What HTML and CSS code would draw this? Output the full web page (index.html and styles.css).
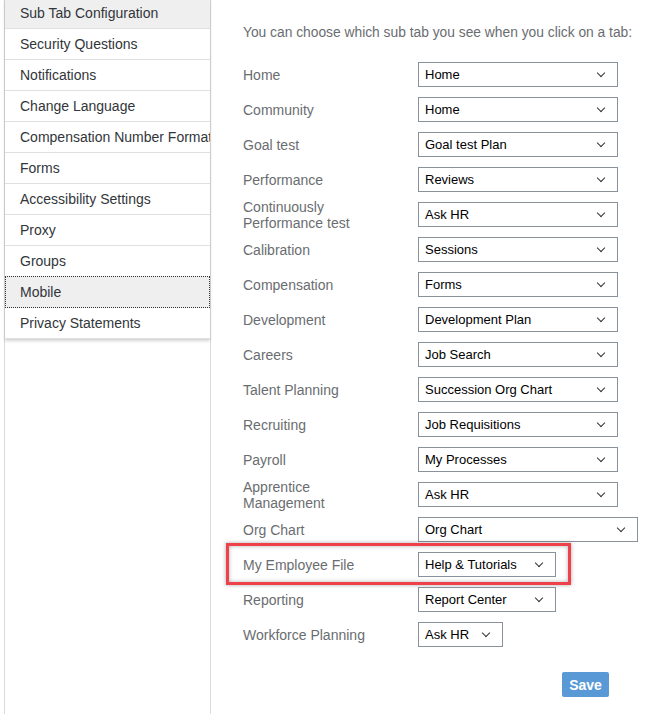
FILE: index.html
```html
<!DOCTYPE html>
<html lang="en">
<head>
    <meta charset="UTF-8">
    <title>Sub Tab Configuration</title>
    <link rel="stylesheet" href="styles.css">
</head>
<body>
    <aside class="sidebar">
        <ul class="side-nav">
            <li class="current">Sub Tab Configuration</li>
            <li>Security Questions</li>
            <li>Notifications</li>
            <li>Change Language</li>
            <li>Compensation Number Format</li>
            <li>Forms</li>
            <li>Accessibility Settings</li>
            <li>Proxy</li>
            <li>Groups</li>
            <li class="focused">Mobile</li>
            <li>Privacy Statements</li>
        </ul>
    </aside>

    <main class="content">
        <p class="intro">You can choose which sub tab you see when you click on a tab:</p>

        <div class="tab-list">
            <div class="tab-row"><span class="tab-label">Home</span><div class="picker w-200">Home</div></div>
            <div class="tab-row"><span class="tab-label">Community</span><div class="picker w-200">Home</div></div>
            <div class="tab-row"><span class="tab-label">Goal test</span><div class="picker w-200">Goal test Plan</div></div>
            <div class="tab-row"><span class="tab-label">Performance</span><div class="picker w-200">Reviews</div></div>
            <div class="tab-row"><span class="tab-label">Continuously<br>Performance test</span><div class="picker w-200">Ask HR</div></div>
            <div class="tab-row"><span class="tab-label">Calibration</span><div class="picker w-200">Sessions</div></div>
            <div class="tab-row"><span class="tab-label">Compensation</span><div class="picker w-200">Forms</div></div>
            <div class="tab-row"><span class="tab-label">Development</span><div class="picker w-200">Development Plan</div></div>
            <div class="tab-row"><span class="tab-label">Careers</span><div class="picker w-200">Job Search</div></div>
            <div class="tab-row"><span class="tab-label">Talent Planning</span><div class="picker w-200">Succession Org Chart</div></div>
            <div class="tab-row"><span class="tab-label">Recruiting</span><div class="picker w-200">Job Requisitions</div></div>
            <div class="tab-row"><span class="tab-label">Payroll</span><div class="picker w-200">My Processes</div></div>
            <div class="tab-row"><span class="tab-label">Apprentice<br>Management</span><div class="picker w-200">Ask HR</div></div>
            <div class="tab-row"><span class="tab-label">Org Chart</span><div class="picker w-220">Org Chart</div></div>
            <div class="tab-row highlighted"><span class="tab-label">My Employee File</span><div class="picker w-138">Help &amp; Tutorials</div></div>
            <div class="tab-row"><span class="tab-label">Reporting</span><div class="picker w-138">Report Center</div></div>
            <div class="tab-row"><span class="tab-label">Workforce Planning</span><div class="picker w-85">Ask HR</div></div>
        </div>

        <div class="actions">
            <button class="btn-save">Save</button>
        </div>
    </main>
</body>
</html>
```

FILE: styles.css
```css
*, *::before, *::after {
    margin: 0;
    padding: 0;
    box-sizing: border-box;
}

body {
    font-family: 'Liberation Sans', Arial, sans-serif;
    font-size: 14px;
    color: #32363a;
    background: #fff;
    display: flex;
    min-height: 100vh;
    overflow: hidden;
}

.sidebar {
    width: 207px;
    margin-left: 4px;
    border-left: 1px solid #d9d9d9;
    border-right: 1px solid #dcdcdc;
    min-height: 100vh;
}

.side-nav {
    list-style: none;
    margin-top: -2px;
    box-shadow: 0 2px 3px rgba(0, 0, 0, 0.18);
}

.side-nav li {
    height: 31px;
    line-height: 30px;
    padding-left: 15px;
    border-bottom: 1px solid #e0e0e0;
    white-space: nowrap;
    overflow: hidden;
}

.side-nav li.current {
    background: #efefef;
}

.side-nav li.focused {
    background: #efefef;
    border: 1px dotted #333;
    padding-left: 14px;
    line-height: 31px;
    margin-top: -1px;
    height: 32px;
}

.content {
    padding: 24px 0 0 32px;
    flex: 1;
}

.intro {
    color: #6a6d70;
    font-size: 13.8px;
    line-height: 18px;
    margin-bottom: 15px;
}

.tab-row {
    display: flex;
    align-items: center;
    height: 35px;
    position: relative;
}

.tab-label {
    width: 175px;
    color: #6a6d70;
    line-height: 16px;
}

.picker {
    height: 25px;
    border: 1px solid #89919a;
    padding: 0 0 0 6px;
    line-height: 23px;
    font-family: 'Liberation Sans', Arial, sans-serif;
    font-size: 13px;
    color: #000;
    position: relative;
}

.picker::after {
    content: "";
    position: absolute;
    right: 13px;
    top: 7px;
    width: 6px;
    height: 6px;
    border-right: 1px solid #333;
    border-bottom: 1px solid #333;
    transform: rotate(45deg);
}

.w-200 { width: 200px; }
.w-220 { width: 220px; }
.w-138 { width: 138px; }
.w-85 { width: 85px; }

.highlighted::before {
    content: "";
    position: absolute;
    left: -17px;
    top: -4px;
    width: 345px;
    height: 42px;
    border: 3px solid #ef4149;
    box-shadow: 0 0 4px rgba(0, 0, 0, 0.35), inset 0 0 4px rgba(0, 0, 0, 0.3);
    pointer-events: none;
}

.actions {
    width: 366px;
    display: flex;
    justify-content: flex-end;
    margin-top: 20px;
}

.btn-save {
    width: 47px;
    height: 25px;
    background: #5899d6;
    color: #fff;
    border: none;
    border-radius: 2px;
    font-family: 'Liberation Sans', Arial, sans-serif;
    font-size: 14px;
    font-weight: bold;
}
```
